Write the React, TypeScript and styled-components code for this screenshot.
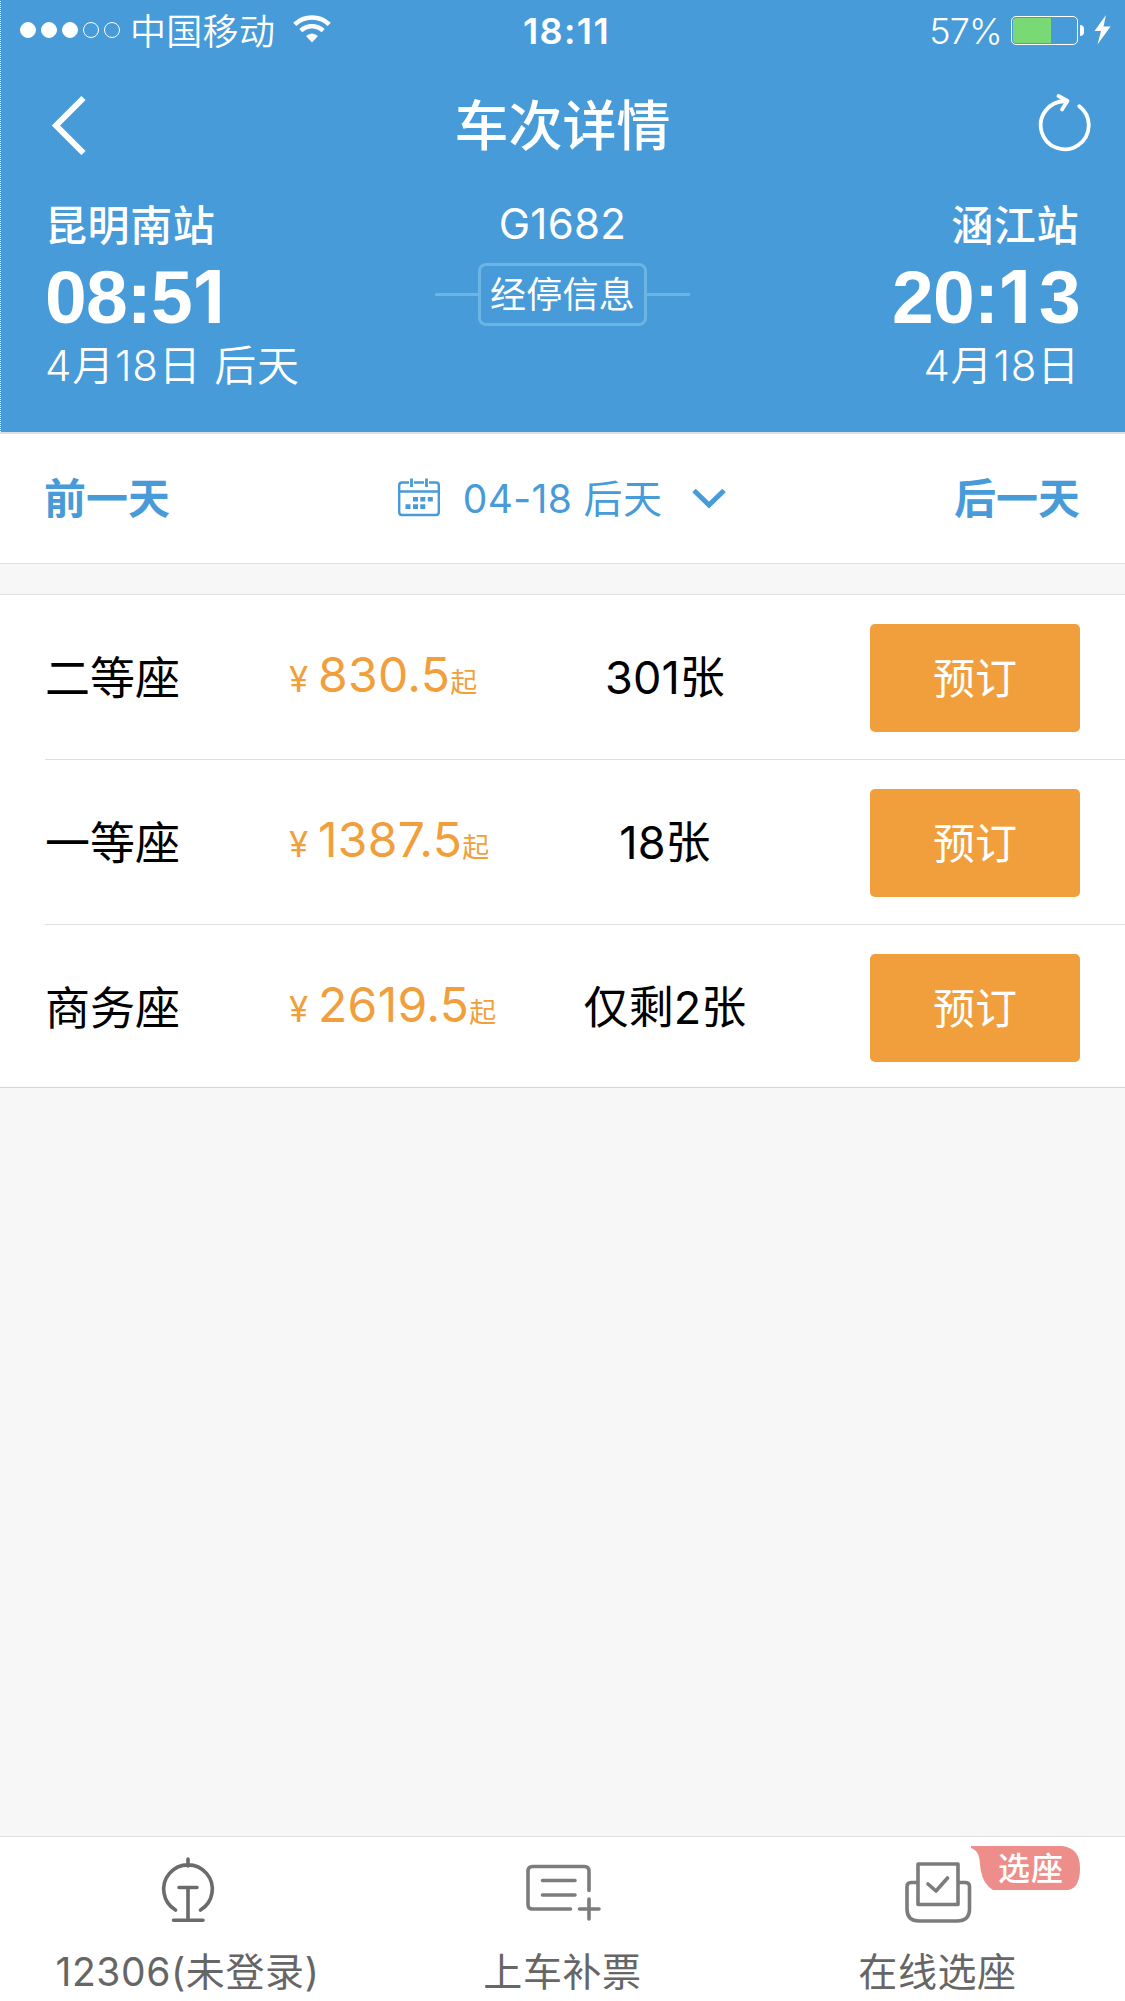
import React from 'react';
import styled, { createGlobalStyle } from 'styled-components';

const BLUE = '#479bd8';
const ORANGE = '#f19f3c';
const LINE = '#dfdfdf';

const GlobalStyle = createGlobalStyle`
  * { box-sizing: border-box; }
  body {
    margin: 0;
    background: #f7f7f7;
    font-family: Inter, "Noto Sans CJK SC", sans-serif;
  }
  button { font: inherit; border: 0; padding: 0; background: none; color: inherit; }
`;

const Screen = styled.div`
  width: 1125px;
  height: 2001px;
  display: flex;
  flex-direction: column;
  background: #f7f7f7;
  overflow: hidden;
`;

const Header = styled.header`
  height: 434px;
  border-bottom: 2px solid ${LINE};
  color: #fff;
  background:
    repeating-linear-gradient(#479bd8 0 1px, #fff 1px 2px) 0 0 / 1px 100% no-repeat,
    ${BLUE};
`;

const StatusBar = styled.div`
  height: 60px;
  display: grid;
  grid-template-columns: 1fr auto 1fr;
  grid-template-rows: 60px;
  padding: 0 14px 0 20px;
  line-height: 62px;
  font-size: 36px;
`;

const Carrier = styled.div`
  display: flex;
  align-items: center;

  & > svg {
    margin-bottom: 2px;
  }
`;

const Dots = styled.div`
  display: flex;
  gap: 5px;
  margin-right: 10px;
`;

const Dot = styled.span<{ $on: boolean }>`
  width: 16px;
  height: 16px;
  border-radius: 50%;
  border: 1px solid #fff;
  background: ${(p) => (p.$on ? '#fff' : 'transparent')};
`;

const CarrierName = styled.span`
  padding-top: 3px;
  font-weight: 350;
  letter-spacing: 0.3px;
  margin-right: 18px;
`;

const Clock = styled.div`
  font-weight: 600;
  letter-spacing: 1.4px;
  padding-left: 2px;
`;

const Power = styled.div`
  display: flex;
  align-items: center;
  justify-content: flex-end;
`;

const Percent = styled.span`
  padding-top: 2px;
  font-weight: 350;
  letter-spacing: -0.8px;
  margin-right: 9px;
`;

const Battery = styled.div`
  width: 67px;
  height: 29px;
  margin-right: 2px;
  padding: 1px;
  border: 1px solid #fff;
  border-radius: 5px;
`;

const Charge = styled.div`
  width: 61%;
  height: 100%;
  border-radius: 3px 0 0 3px;
  background: #79d974;
`;

const Nub = styled.div`
  width: 4px;
  height: 11px;
  margin-right: 10px;
  border-radius: 0 4px 4px 0;
  background: #fff;
`;

const NavBar = styled.div`
  height: 130px;
  display: grid;
  grid-template-columns: 1fr auto 1fr;
  align-items: center;
  padding: 0 33px;
`;

const Title = styled.h1`
  margin: 0;
  padding-top: 4px;
  font-size: 54px;
  line-height: 126px;
  font-weight: 500;
`;

const NavButton = styled.button<{ $end?: boolean }>`
  display: flex;
  justify-content: ${(p) => (p.$end ? 'flex-end' : 'flex-start')};
  padding: ${(p) => (p.$end ? '0 0 4px' : '0 0 1px 17px')};
`;

const Trip = styled.section`
  display: grid;
  grid-template-columns: 1fr 255px 1fr;
  padding: 7px 45px 0;
`;

const Stop = styled.div<{ $end?: boolean }>`
  display: flex;
  flex-direction: column;
  align-items: ${(p) => (p.$end ? 'flex-end' : 'flex-start')};
`;

const Station = styled.div`
  padding: 1px 1px 0 0;
  font-size: 42px;
  line-height: 55px;
  font-weight: 500;
  letter-spacing: 0.6px;
`;

const Time = styled.div`
  display: flex;
  align-items: baseline;
  font-family: "Liberation Sans", Arial, sans-serif;
  font-size: 75px;
  font-weight: 700;
  line-height: 88px;
  letter-spacing: -0.8px;
`;

const NarrowOne = styled.span`
  width: 41px;
  padding-left: 1px;
  font-family: Inter, sans-serif;
  font-size: 73px;
  line-height: 60px;
`;

const DayLine = styled.div`
  margin-top: -1px;
  font-size: 42px;
  line-height: 52px;
  font-weight: 350;
  letter-spacing: 0.8px;
`;

const Train = styled.div`
  display: flex;
  flex-direction: column;
  align-items: center;
`;

const TrainNo = styled.div`
  font-size: 42px;
  line-height: 54px;
  letter-spacing: 0.3px;
`;

const StopsRow = styled.div`
  width: 100%;
  display: flex;
  align-items: center;
  margin-top: 12px;
`;

const Rule = styled.span`
  flex: 1;
  height: 3px;
  background: #6cb4e3;
`;

const StopsButton = styled.button`
  width: 169px;
  height: 63px;
  padding-top: 1px;
  border: 3px solid #6cb4e3;
  border-radius: 8px;
  font-size: 36px;
  line-height: 56px;
  letter-spacing: 0.3px;
`;

const DateBar = styled.nav`
  height: 129px;
  flex: none;
  display: grid;
  grid-template-columns: 1fr auto 1fr;
  align-items: center;
  padding: 0 45px 0 44px;
  background: #fff;
  color: ${BLUE};
`;

const DayButton = styled.button<{ $end?: boolean }>`
  text-align: ${(p) => (p.$end ? 'right' : 'left')};
  padding-top: 1px;
  font-size: 42px;
  line-height: 60px;
  font-weight: 700;
`;

const DatePicker = styled.button`
  display: flex;
  align-items: center;
  font-size: 39px;
  line-height: 60px;

  & > svg:first-child {
    margin-bottom: 3px;
  }
`;

const DateText = styled.span`
  margin: 0 30px 0 23px;
  white-space: nowrap;
  letter-spacing: 0.35px;
`;

const Gap = styled.div`
  border-top: 1px solid ${LINE};
`;

const SeatList = styled.main`
  margin-top: 30px;
  border-top: 1px solid ${LINE};
  border-bottom: 1px solid #d4d4d4;
  background: #fff;
`;

const SeatRow = styled.div`
  height: 165px;
  margin-left: 45px;
  padding: 29px 45px 0 0;
  display: grid;
  grid-template-columns: 244px 261px 1fr 210px;
  align-items: start;
  border-bottom: 1px solid ${LINE};
  &:last-child {
    height: 162px;
    border-bottom: 0;
  }
`;

const SeatName = styled.div`
  font-size: 45px;
  line-height: 110px;
`;

const Price = styled.div`
  display: flex;
  align-items: baseline;
  color: ${ORANGE};
  line-height: 101px;
`;

const Yen = styled.span`
  width: 29px;
  font-size: 35px;
`;

const Amount = styled.span`
  font-size: 48px;
  letter-spacing: 0.3px;
`;

const From = styled.span`
  font-size: 27px;
`;

const Count = styled.div`
  width: 230px;
  text-align: center;
  font-size: 45px;
  line-height: 108px;
  letter-spacing: 0.1px;
`;

const BookButton = styled.button`
  width: 210px;
  height: 108px;
  padding-top: 2px;
  border-radius: 5px;
  background: ${ORANGE};
  color: #fff;
  font-size: 42px;
  line-height: 106px;
`;

const TabBar = styled.footer`
  height: 165px;
  margin-top: auto;
  display: grid;
  grid-template-columns: repeat(3, 1fr);
  border-top: 1px solid ${LINE};
  background: #fff;
  color: #666;
`;

const Tab = styled.button`
  display: flex;
  flex-direction: column;
  align-items: center;
  position: relative;
  font-size: 39px;
`;

const TabIcon = styled.svg<{ $tone: string }>`
  width: 84px;
  height: 72px;
  margin-top: 17px;
  fill: none;
  stroke: ${(p) => p.$tone};
  stroke-width: 3.6;
  stroke-linecap: round;
  stroke-linejoin: round;
`;

const TabLabel = styled.span`
  margin-top: 15px;
  line-height: 61px;
  letter-spacing: 0.6px;
`;

const Badge = styled.span`
  position: absolute;
  left: 221px;
  top: 9px;
  width: 109px;
  height: 44px;
`;

const BadgeShape = styled.svg`
  display: block;
`;

const BadgeText = styled.span`
  position: absolute;
  left: 27px;
  top: 1px;
  color: #fff;
  font-size: 32px;
  font-weight: 500;
  line-height: 43px;
  letter-spacing: 1px;
  white-space: nowrap;
`;

const seats = [
  { name: '二等座', price: '830.5', count: '301张' },
  { name: '一等座', price: '1387.5', count: '18张' },
  { name: '商务座', price: '2619.5', count: '仅剩2张' },
];

const WifiIcon = () => (
  <svg width="38" height="28" viewBox="0 0 38 28" fill="none" stroke="#fff">
    <path d="M1.8 9.4A25 25 0 0 1 36.2 9.4" strokeWidth="4.6" />
    <path d="M7.8 15.6A16.5 16.5 0 0 1 30.2 15.6" strokeWidth="4.4" />
    <path d="M13 21Q19 16 25 21L19 27.5Z" fill="#fff" stroke="none" />
  </svg>
);

const BoltIcon = () => (
  <svg width="17" height="30" viewBox="0 0 17 30" fill="#fff">
    <path d="M12 0L0.5 16H7L3.5 29.5L16.5 11.5H9.5Z" />
  </svg>
);

const BackIcon = () => (
  <svg width="36" height="60" viewBox="0 0 36 60" fill="none" stroke="#fff" strokeWidth="6">
    <path d="M33.5 3L6 30.5L33.5 58" />
  </svg>
);

const RefreshIcon = () => (
  <svg width="54" height="60" viewBox="0 0 54 60" fill="none" stroke="#fff" strokeWidth="3.8" strokeLinecap="round" strokeLinejoin="round">
    <path d="M41.3 13.2A24 24 0 1 1 28 8.3" />
    <path d="M20.5 3L29.5 8L24 16.5" />
  </svg>
);

const CalendarIcon = () => (
  <svg width="42" height="39" viewBox="0 0 42 39" fill="none" stroke={BLUE} strokeWidth="2.4">
    <path d="M11 4.5H4Q1.2 4.5 1.2 7.5V34Q1.2 37 4 37H38Q40.8 37 40.8 34V7.5Q40.8 4.5 38 4.5H31M16 4.5H26M2 13.5H40" />
    <path d="M13.5 0.5V9M28.5 0.5V9" strokeWidth="2.8" />
    <path d="M15 21.2H20M22.3 21.2H27.3M29.8 21.2H34.8M7.5 28.6H12.5M15 28.6H20M22.3 28.6H27.3" strokeWidth="4.6" />
  </svg>
);

const ChevronDown = () => (
  <svg width="34" height="22" viewBox="0 0 34 22" fill="none" stroke={BLUE} strokeWidth="5">
    <path d="M2 2.5L17 17L32 2.5" />
  </svg>
);

const ClockTime = ({ value }: { value: string }) => (
  <Time>
    {value
      .split(/(1)/)
      .filter(Boolean)
      .map((part, i) => (part === '1' ? <NarrowOne key={i}>1</NarrowOne> : <span key={i}>{part}</span>))}
  </Time>
);

export default function App() {
  return (
    <>
      <GlobalStyle />
      <Screen>
        <Header>
          <StatusBar>
            <Carrier>
              <Dots>
                {[true, true, true, false, false].map((on, i) => (
                  <Dot key={i} $on={on} />
                ))}
              </Dots>
              <CarrierName>中国移动</CarrierName>
              <WifiIcon />
            </Carrier>
            <Clock>18:11</Clock>
            <Power>
              <Percent>57%</Percent>
              <Battery>
                <Charge />
              </Battery>
              <Nub />
              <BoltIcon />
            </Power>
          </StatusBar>
          <NavBar>
            <NavButton>
              <BackIcon />
            </NavButton>
            <Title>车次详情</Title>
            <NavButton $end>
              <RefreshIcon />
            </NavButton>
          </NavBar>
          <Trip>
            <Stop>
              <Station>昆明南站</Station>
              <ClockTime value="08:51" />
              <DayLine>4月18日 后天</DayLine>
            </Stop>
            <Train>
              <TrainNo>G1682</TrainNo>
              <StopsRow>
                <Rule />
                <StopsButton>经停信息</StopsButton>
                <Rule />
              </StopsRow>
            </Train>
            <Stop $end>
              <Station>涵江站</Station>
              <ClockTime value="20:13" />
              <DayLine>4月18日</DayLine>
            </Stop>
          </Trip>
        </Header>

        <DateBar>
          <DayButton>前一天</DayButton>
          <DatePicker>
            <CalendarIcon />
            <DateText>04-18 后天</DateText>
            <ChevronDown />
          </DatePicker>
          <DayButton $end>后一天</DayButton>
        </DateBar>
        <Gap />

        <SeatList>
          {seats.map((s) => (
            <SeatRow key={s.name}>
              <SeatName>{s.name}</SeatName>
              <Price>
                <Yen>¥</Yen>
                <Amount>{s.price}</Amount>
                <From>起</From>
              </Price>
              <Count>{s.count}</Count>
              <BookButton>预订</BookButton>
            </SeatRow>
          ))}
        </SeatList>

        <TabBar>
          <Tab>
            <TabIcon viewBox="0 0 84 72" $tone="#6b6b6b">
              <path d="M42 5V12M29.5 56A24.3 24.3 0 1 1 54.5 56M33 33.5H51M42 33.5V66M27.5 66.3H57" />
            </TabIcon>
            <TabLabel>12306(未登录)</TabLabel>
          </Tab>
          <Tab>
            <TabIcon viewBox="0 0 84 72" $tone="#7c7c7c">
              <path d="M49.5 55H11.5Q7 55 7 50.5V17.5Q7 12.5 11.5 12.5H63.5Q68 12.5 68 17.5V36.5M21.5 26.5H54M21.5 41H54M58.5 55H78M68 45V65" />
            </TabIcon>
            <TabLabel>上车补票</TabLabel>
          </Tab>
          <Tab>
            <TabIcon viewBox="0 0 84 72" $tone="#7c7c7c">
              <path d="M22 10H62V50.5H22ZM22 28.5H15Q11 28.5 11 32.5V55Q11 67 23 67H61Q73.5 67 73.5 55V32.5Q73.5 28.5 69 28.5H62M32 30L40 37L51.5 24" />
            </TabIcon>
            <TabLabel>在线选座</TabLabel>
            <Badge>
              <BadgeShape width="109" height="44" viewBox="0 0 109 44">
                <path d="M0 0H91Q109 2 109 22T97 44H22Q12 38 10 25C8 14 10 6 0 2Z" fill="#ed8e8a" />
              </BadgeShape>
              <BadgeText>选座</BadgeText>
            </Badge>
          </Tab>
        </TabBar>
      </Screen>
    </>
  );
}
